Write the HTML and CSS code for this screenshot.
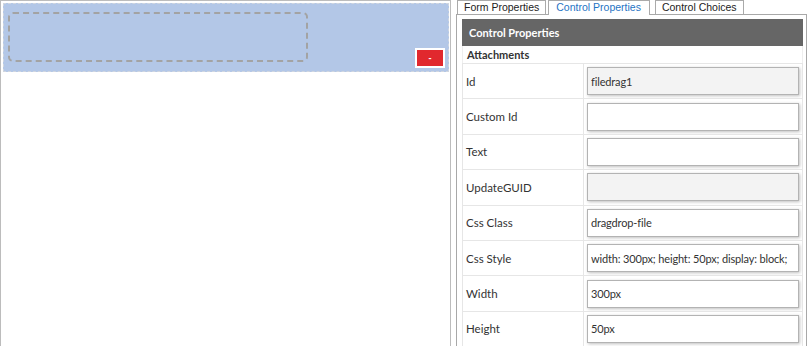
FILE: index.html
```html
<!DOCTYPE html>
<html lang="en">
    <head>
        <link rel="stylesheet" href="styles.css">
    </head>
    <body>
        <div class="designer">
            <div class="canvas">
                <div class="drop_row">
                    <div class="dragdrop-file"></div>
                    <button class="remove_button">-</button>
                </div>
            </div>

            <div class="side">
                <div class="tabs">
                    <span class="tab">Form Properties</span>
                    <span class="tab active">Control Properties</span>
                    <span class="tab">Control Choices</span>
                </div>
                <div class="props">
                    <div class="props_head">Control Properties</div>
                    <div class="props_group">Attachments</div>
                    <table class="props_table">
                        <tr><td class="label">Id</td><td><input class="field locked" value="filedrag1" readonly></td></tr>
                        <tr><td class="label">Custom Id</td><td><input class="field" value=""></td></tr>
                        <tr><td class="label">Text</td><td><input class="field" value=""></td></tr>
                        <tr><td class="label">UpdateGUID</td><td><input class="field locked" value="" readonly></td></tr>
                        <tr><td class="label">Css Class</td><td><input class="field" value="dragdrop-file"></td></tr>
                        <tr><td class="label">Css Style</td><td><input class="field" value="width: 300px; height: 50px; display: block;"></td></tr>
                        <tr><td class="label">Width</td><td><input class="field" value="300px"></td></tr>
                        <tr><td class="label">Height</td><td><input class="field" value="50px"></td></tr>
                    </table>
                </div>
            </div>
        </div>
    </body>
</html>
```

FILE: styles.css
```css
@charset "UTF-8";
body{
    margin: 0;
    background: #fff;
    font-family: Lato, "Open Sans", sans-serif;
    font-size: 12px;
    color: #333;
    overflow: hidden;
}
.designer{
    display: flex;
    height: 346px;
    gap: 5px;
}
.canvas{
    width: 451px;
    border: 1px solid #bcbcbc;
    border-bottom: none;
    padding: 2px 1px 0 2px;
    box-sizing: border-box;
}
.drop_row{
    background: #b3c7e7;
    border: 1px dashed #d0d6df;
    padding: 8px 3px 3px 4px;
    display: flex;
    justify-content: space-between;
    align-items: flex-end;
    box-sizing: border-box;
    height: 69px;
}
.dragdrop-file{
    width: 300px;
    height: 50px;
    border: 2px dashed #a3a3a3;
    border-radius: 5px;
    box-sizing: border-box;
    align-self: flex-start;
}
.remove_button{
    width: 30px;
    height: 20px;
    background: #e1282e;
    border: 2px solid #fff;
    color: #fff;
    font-size: 9px;
    font-weight: bold;
    padding: 0;
}
.side{
    width: 351px;
    display: flex;
    flex-direction: column;
}
.tabs{
    display: flex;
    height: 14px;
    padding-left: 1px;
    gap: 2px;
}
.tab{
    font-family: "Liberation Sans", Arial, sans-serif;
    font-size: 10.5px;
    line-height: 13px;
    color: #222;
    border: 1px solid #aaa;
    border-bottom: none;
    padding: 0 6px;
    height: 14px;
    box-sizing: border-box;
    background: #fff;
}
.tab.active{
    color: #1f74c4;
    height: 15px;
    padding: 0 8px 0 7px;
    margin-right: 3px;
    position: relative;
    z-index: 1;
}
.props{
    flex: 1;
    border: 1px solid #a8a8a8;
    border-bottom: none;
    padding: 4px 3px 0 5px;
}
.props_head{
    background: #666;
    color: #fff;
    font-weight: bold;
    font-size: 11px;
    height: 27px;
    line-height: 28px;
    padding-left: 7px;
}
.props_group{
    font-weight: bold;
    font-size: 11px;
    color: #333;
    height: 17px;
    line-height: 18px;
    padding-left: 4px;
    border-left: 1px solid #eee;
    border-right: 1px solid #eee;
}
.props_table{
    width: 100%;
    border-collapse: collapse;
    table-layout: fixed;
}
.props_table td{
    border: 1px solid #e6e6e6;
    height: 34.4px;
    padding: 0 3px;
}
.props_table td.label{
    width: 114px;
    color: #333;
    font-size: 11.5px;
}
.field{
    width: 100%;
    height: 28px;
    box-sizing: border-box;
    border: 1px solid #b3b3b3;
    box-shadow: 1px 1px 3px rgba(0,0,0,0.25);
    font-family: Lato, "Open Sans", sans-serif;
    font-size: 11px;
    letter-spacing: -0.15px;
    color: #333;
    padding: 0 3px;
    display: block;
}
.field.locked{
    background: #f3f3f3;
}
```
